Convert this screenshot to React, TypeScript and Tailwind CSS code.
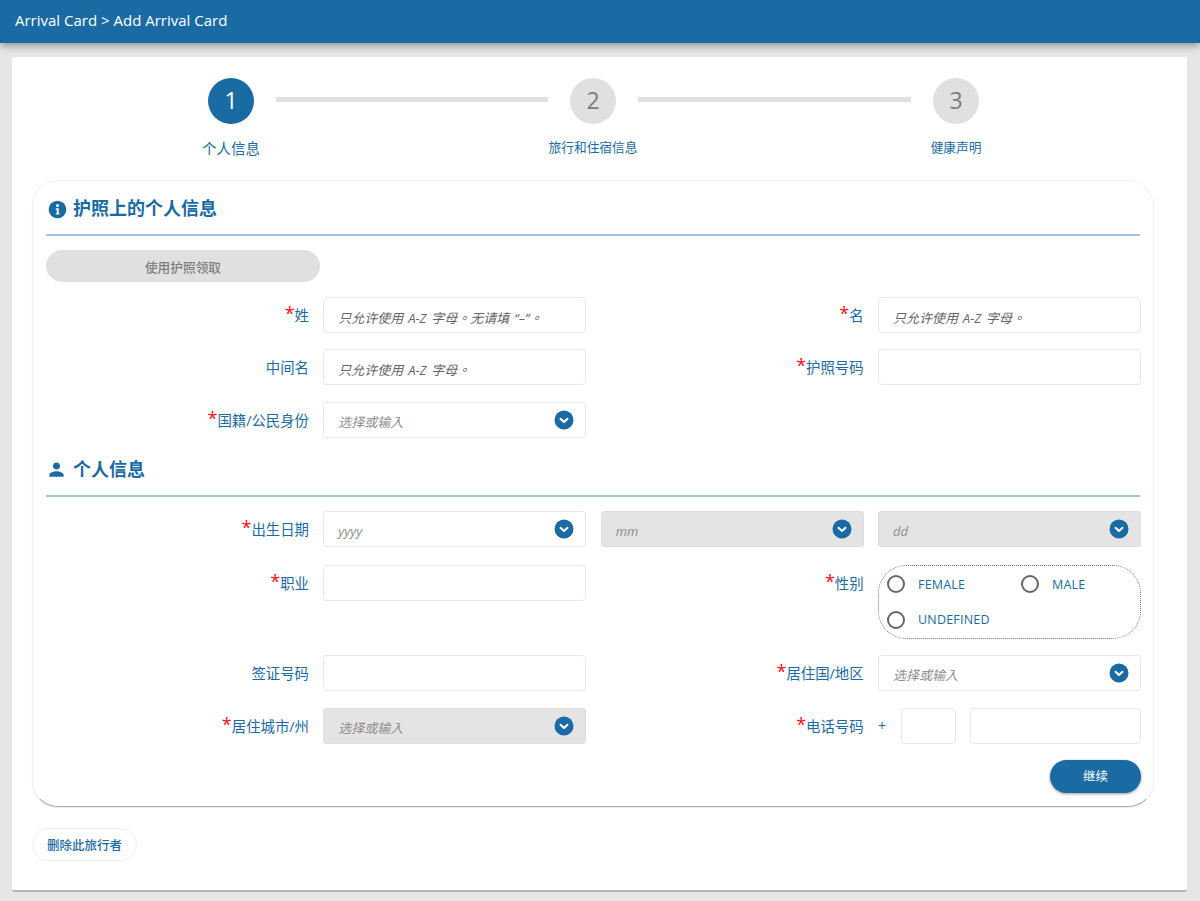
import React from "react";

const font = "font-['Open_Sans','Noto_Sans_CJK_SC',sans-serif]";

const ChevronCircle = () => (
  <svg width="20" height="20" viewBox="0 0 20 20" className="shrink-0">
    <circle cx="10" cy="10" r="9.5" fill="#1a6aa3" />
    <path d="M6.5 8.8 L10 12 L13.5 8.8" fill="none" stroke="#fff" strokeWidth="2" strokeLinecap="round" strokeLinejoin="round" />
  </svg>
);

const Label = ({ text, required }: { text: string; required?: boolean }) => (
  <div className="flex h-9 items-center justify-end pt-[2px] text-[14.4px] leading-none text-[#1a6aa3]">
    {required && <span className="relative -top-[3px] text-[18px] leading-none text-[#f5101a]">*</span>}
    <span>{text}</span>
  </div>
);

const TextInput = ({ placeholder, className }: { placeholder?: string; className?: string }) => (
  <input
    placeholder={placeholder}
    className={`h-9 w-full min-w-0 rounded-[4px] border border-[#e8e8e8] bg-white px-[14px] pt-[5px] font-['Open_Sans','Noto_Sans_CJK_TC',sans-serif] text-[13px] outline-none [word-spacing:1.5px] placeholder:italic placeholder:text-[#666] ${className ?? ""}`}
  />
);

const SelectBox = ({ text, disabled }: { text: string; disabled?: boolean }) => (
  <div
    className={`flex h-9 items-center justify-between rounded-[3px] border pl-[14px] pr-[11px] ${
      disabled ? "border-[#dedede] bg-[#e5e4e4]" : "border-[#e8e8e8] bg-white"
    }`}
  >
    <span className="pt-[6px] font-['Open_Sans','Noto_Sans_CJK_TC',sans-serif] text-[13px] italic text-[#8d8d8d]">{text}</span>
    <div className="-mt-[1px]">
      <ChevronCircle />
    </div>
  </div>
);

const Radio = ({ text, className }: { text: string; className?: string }) => (
  <label className={`flex items-center gap-[13px] ${className ?? ""}`}>
    <span className="h-[18px] w-[18px] shrink-0 rounded-full border-2 border-[#666]" />
    <span className="pt-[2px] text-[12.5px] tracking-[0.2px] text-[#1a6aa3]">{text}</span>
  </label>
);

const SectionTitle = ({ icon, text }: { icon: React.ReactNode; text: string }) => (
  <div className="border-b-2 border-[#a3c6e0] pb-[14px]">
    <div className="flex h-[24px] items-center">
      <div className="w-[27px]">{icon}</div>
      <span className="text-[18px] font-semibold leading-none text-[#1a6aa3]">{text}</span>
    </div>
  </div>
);

const Step = ({ n, label, active }: { n: number; label: string; active?: boolean }) => (
  <div className="flex w-[46px] flex-col items-center">
    <div
      className={`flex h-[46px] w-[46px] items-center justify-center rounded-full pb-[2px] text-[23px] ${
        active ? "bg-[#1a6aa3] text-white" : "bg-[#e0e0e0] text-[#7c7c7c]"
      }`}
    >
      {n}
    </div>
    <div
      className={`whitespace-nowrap text-[#1a6aa3] ${
        active ? "mt-[15px] text-[14.5px] leading-[20px]" : "mt-[13px] text-[12.7px] leading-[20px]"
      }`}
    >
      {label}
    </div>
  </div>
);

const Line = ({ className }: { className: string }) => (
  <div className={`mx-[22px] mt-[19px] h-[5px] bg-[#e0e0e0] ${className}`} />
);

export default function App() {
  return (
    <div className={`${font} min-h-[901px] bg-[#e6e6e6]`}>
      <header className="flex h-[43px] items-center bg-[#1a6aa3] pb-[2px] pl-[15px] text-[15px] text-white shadow-[0_3px_8px_rgba(0,0,0,0.35)]">
        Arrival Card &gt; Add Arrival Card
      </header>

      <main className="mx-[12px] mt-[14px] h-[835px] w-[1175px] rounded-[3px] border-b-2 border-[#b5b5b5] bg-white px-[20px] pt-[21px]">
        <div className="flex pl-[176px]">
          <Step n={1} label="个人信息" active />
          <Line className="w-[272px]" />
          <Step n={2} label="旅行和住宿信息" />
          <Line className="w-[273px]" />
          <Step n={3} label="健康声明" />
        </div>

        <section className="mt-[21px] h-[627px] w-[1122px] rounded-[26px] border border-[#f2f2f2] border-b-[#b0b0b0] bg-white px-[13px] pt-[15px] shadow-[0_1px_1px_rgba(0,0,0,0.08)]">
          <SectionTitle
            text="护照上的个人信息"
            icon={
              <svg width="19" height="19" viewBox="0 0 19 19" className="mt-[3px] ml-[2px]">
                <circle cx="9.5" cy="9.5" r="8.8" fill="#1a6aa3" />
                <circle cx="9.5" cy="5.6" r="1.5" fill="#fff" />
                <path d="M7.7 8.2 h3 v5.2 h1 v1.2 h-4 v-1.2 h1 v-4 h-1 z" fill="#fff" />
              </svg>
            }
          />

          <button
            disabled
            className="mt-[14px] block h-[32px] w-[274px] rounded-[16px] bg-[#e0e0e0] pt-[3px] text-[12.7px] font-medium text-[#7f7f7f]"
          >
            使用护照领取
          </button>

          <div className="mt-[15px] grid w-[1095px] grid-cols-4 grid-rows-[36px_37px_36px] gap-x-[14.33px] gap-y-[16px]">
            <Label text="姓" required />
            <TextInput placeholder="只允许使用 A-Z 字母。无请填 “–”。" />
            <Label text="名" required />
            <TextInput placeholder="只允许使用 A-Z 字母。" />

            <Label text="中间名" />
            <TextInput placeholder="只允许使用 A-Z 字母。" />
            <Label text="护照号码" required />
            <TextInput />

            <Label text="国籍/公民身份" required />
            <SelectBox text="选择或输入" />
          </div>

          <div className="mt-[19px]">
            <SectionTitle
              text="个人信息"
              icon={
                <svg width="19" height="19" viewBox="0 0 24 24" className="ml-[1px]">
                  <path
                    d="M12 12c2.6 0 4.5-2 4.5-4.5S14.6 3 12 3 7.5 5 7.5 7.5 9.4 12 12 12zm0 2.2c-3 0-9 1.5-9 4.5V21h18v-2.3c0-3-6-4.5-9-4.5z"
                    fill="#1a6aa3"
                  />
                </svg>
              }
            />
          </div>

          <div className="mt-[14px] grid w-[1095px] grid-cols-4 gap-x-[14.33px]">
            <Label text="出生日期" required />
            <SelectBox text="yyyy" />
            <SelectBox text="mm" disabled />
            <SelectBox text="dd" disabled />

            <div className="mt-[18px]">
              <Label text="职业" required />
            </div>
            <div className="mt-[18px]">
              <TextInput />
            </div>
            <div className="mt-[18px]">
              <Label text="性别" required />
            </div>
            <div className="mt-[18px] flex h-[74px] flex-wrap content-between rounded-[28px] border border-dotted border-[#777] px-[8px] py-[8px]">
              <Radio text="FEMALE" className="w-[134px]" />
              <Radio text="MALE" />
              <Radio text="UNDEFINED" className="w-full" />
            </div>

            <div className="mt-[16px]">
              <Label text="签证号码" />
            </div>
            <div className="mt-[16px]">
              <TextInput />
            </div>
            <div className="mt-[16px]">
              <Label text="居住国/地区" required />
            </div>
            <div className="mt-[16px]">
              <SelectBox text="选择或输入" />
            </div>

            <div className="mt-[17px]">
              <Label text="居住城市/州" required />
            </div>
            <div className="mt-[17px]">
              <SelectBox text="选择或输入" disabled />
            </div>
            <div className="mt-[17px]">
              <Label text="电话号码" required />
            </div>
            <div className="mt-[17px] flex items-center">
              <span className="w-[23px] text-[14px] leading-none text-[#1a6aa3]">+</span>
              <TextInput className="!w-[55px] !px-1" />
              <TextInput className="ml-[14px] flex-1" />
            </div>
          </div>

          <div className="mt-[16px] flex w-[1095px] justify-end">
            <button className="h-[33px] w-[91px] rounded-[17px] bg-[#1a6aa3] pt-[2px] text-[12.5px] text-white shadow-[0_1px_3px_rgba(0,0,0,0.4)]">
              继续
            </button>
          </div>
        </section>

        <button className="mt-[21px] block h-[33px] w-[105px] rounded-[17px] border border-[#eeeeee] bg-white pt-[3px] text-[12.5px] font-medium text-[#1a6aa3]">
          删除此旅行者
        </button>
      </main>
    </div>
  );
}
